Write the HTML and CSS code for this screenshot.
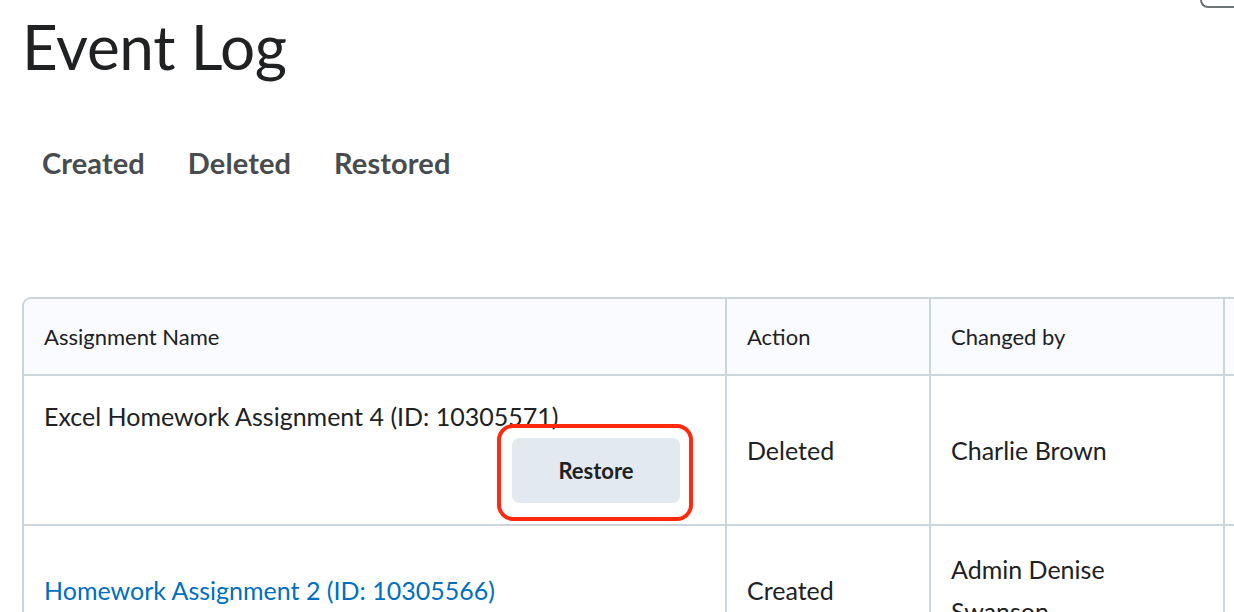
FILE: index.html
```html
<!DOCTYPE html>
<html lang="en">
<head>
<meta charset="utf-8">
<title>Event Log</title>
<link rel="stylesheet" href="styles.css">
</head>
<body>
<div class="page">
  <header class="top">
    <h1 class="title">Event Log</h1>
    <div class="corner-box"></div>
  </header>
  <nav class="tabs">
    <span class="tab">Created</span>
    <span class="tab">Deleted</span>
    <span class="tab">Restored</span>
  </nav>
  <div class="table-wrap">
    <table class="log">
      <colgroup>
        <col class="c-name">
        <col class="c-action">
        <col class="c-by">
        <col class="c-extra">
      </colgroup>
      <thead>
        <tr>
          <th class="first">Assignment Name</th>
          <th>Action</th>
          <th>Changed by</th>
          <th></th>
        </tr>
      </thead>
      <tbody>
        <tr class="row-one">
          <td class="first name-cell">
            <div class="name-text">Excel Homework Assignment 4 (ID: 10305571)</div>
            <div class="restore-row">
              <div class="highlight">
                <button class="restore-btn" type="button">Restore</button>
              </div>
            </div>
          </td>
          <td>Deleted</td>
          <td>Charlie Brown</td>
          <td></td>
        </tr>
        <tr class="row-two">
          <td class="first"><a class="link" href="#">Homework Assignment 2 (ID: 10305566)</a></td>
          <td>Created</td>
          <td>Admin Denise Swanson</td>
          <td></td>
        </tr>
      </tbody>
    </table>
  </div>
</div>
</body>
</html>
```

FILE: styles.css
```css
html, body {
  margin: 0;
  padding: 0;
  overflow: hidden;
  background: #ffffff;
}

body {
  font-family: Lato, "Open Sans", "Liberation Sans", sans-serif;
  color: #202122;
}

.page {
  width: 1234px;
  height: 612px;
  overflow: hidden;
  padding-left: 22px;
  box-sizing: border-box;
}

.top {
  display: flex;
  justify-content: space-between;
  align-items: flex-start;
}

.title {
  margin: 0;
  padding-top: 8px;
  font-size: 62px;
  font-weight: 400;
  line-height: 76px;
  color: #202122;
  letter-spacing: -0.3px;
}

.corner-box {
  width: 40px;
  height: 6px;
  border-left: 2px solid #6e7376;
  border-bottom: 2px solid #6e7376;
  border-bottom-left-radius: 9px;
  margin-right: -8px;
}

.tabs {
  display: flex;
  gap: 43px;
  padding-left: 20px;
  margin-top: 48px;
  height: 60px;
  align-items: center;
}

.tab {
  font-size: 29px;
  font-weight: 700;
  color: #494c4e;
  letter-spacing: 0.1px;
}

.table-wrap {
  margin-top: 105px;
  width: 1600px;
}

.log {
  border-collapse: separate;
  border-spacing: 0;
  table-layout: fixed;
  width: 1500px;
  border-top: 2px solid #cdd5dc;
  border-left: 2px solid #cdd5dc;
  border-top-left-radius: 9px;
  font-size: 25px;
}

.c-name { width: 703px; }
.c-action { width: 204px; }
.c-by { width: 294px; }
.c-extra { width: 299px; }

.log th,
.log td {
  border-right: 2px solid #cdd5dc;
  border-bottom: 2px solid #cdd5dc;
  padding: 0 24px 0 20px;
  text-align: left;
  vertical-align: middle;
  line-height: 42px;
}

.log th {
  background: #f9fbff;
  font-weight: 400;
  font-size: 22px;
  height: 77px;
  box-sizing: border-box;
}

.log thead th.first {
  border-top-left-radius: 8px;
}

.name-cell {
  vertical-align: top !important;
  padding-top: 25px !important;
  padding-bottom: 3px !important;
}

.name-text {
  line-height: 30px;
}

.restore-row {
  display: flex;
  justify-content: flex-end;
  padding-right: 8px;
  margin-top: -7px;
}

.highlight {
  border: 4px solid #ff2a0e;
  border-radius: 16px;
  padding: 10px 9px 14px 11px;
  line-height: 0;
}

.restore-btn {
  width: 168px;
  height: 65px;
  border: none;
  border-radius: 7px;
  background: #e3e9f1;
  font-family: Lato, "Open Sans", "Liberation Sans", sans-serif;
  font-size: 22px;
  font-weight: 700;
  color: #202122;
  padding: 0;
}

.row-two td {
  height: 130px;
  box-sizing: border-box;
}

.link {
  color: #006fbf;
  text-decoration: none;
}
```
